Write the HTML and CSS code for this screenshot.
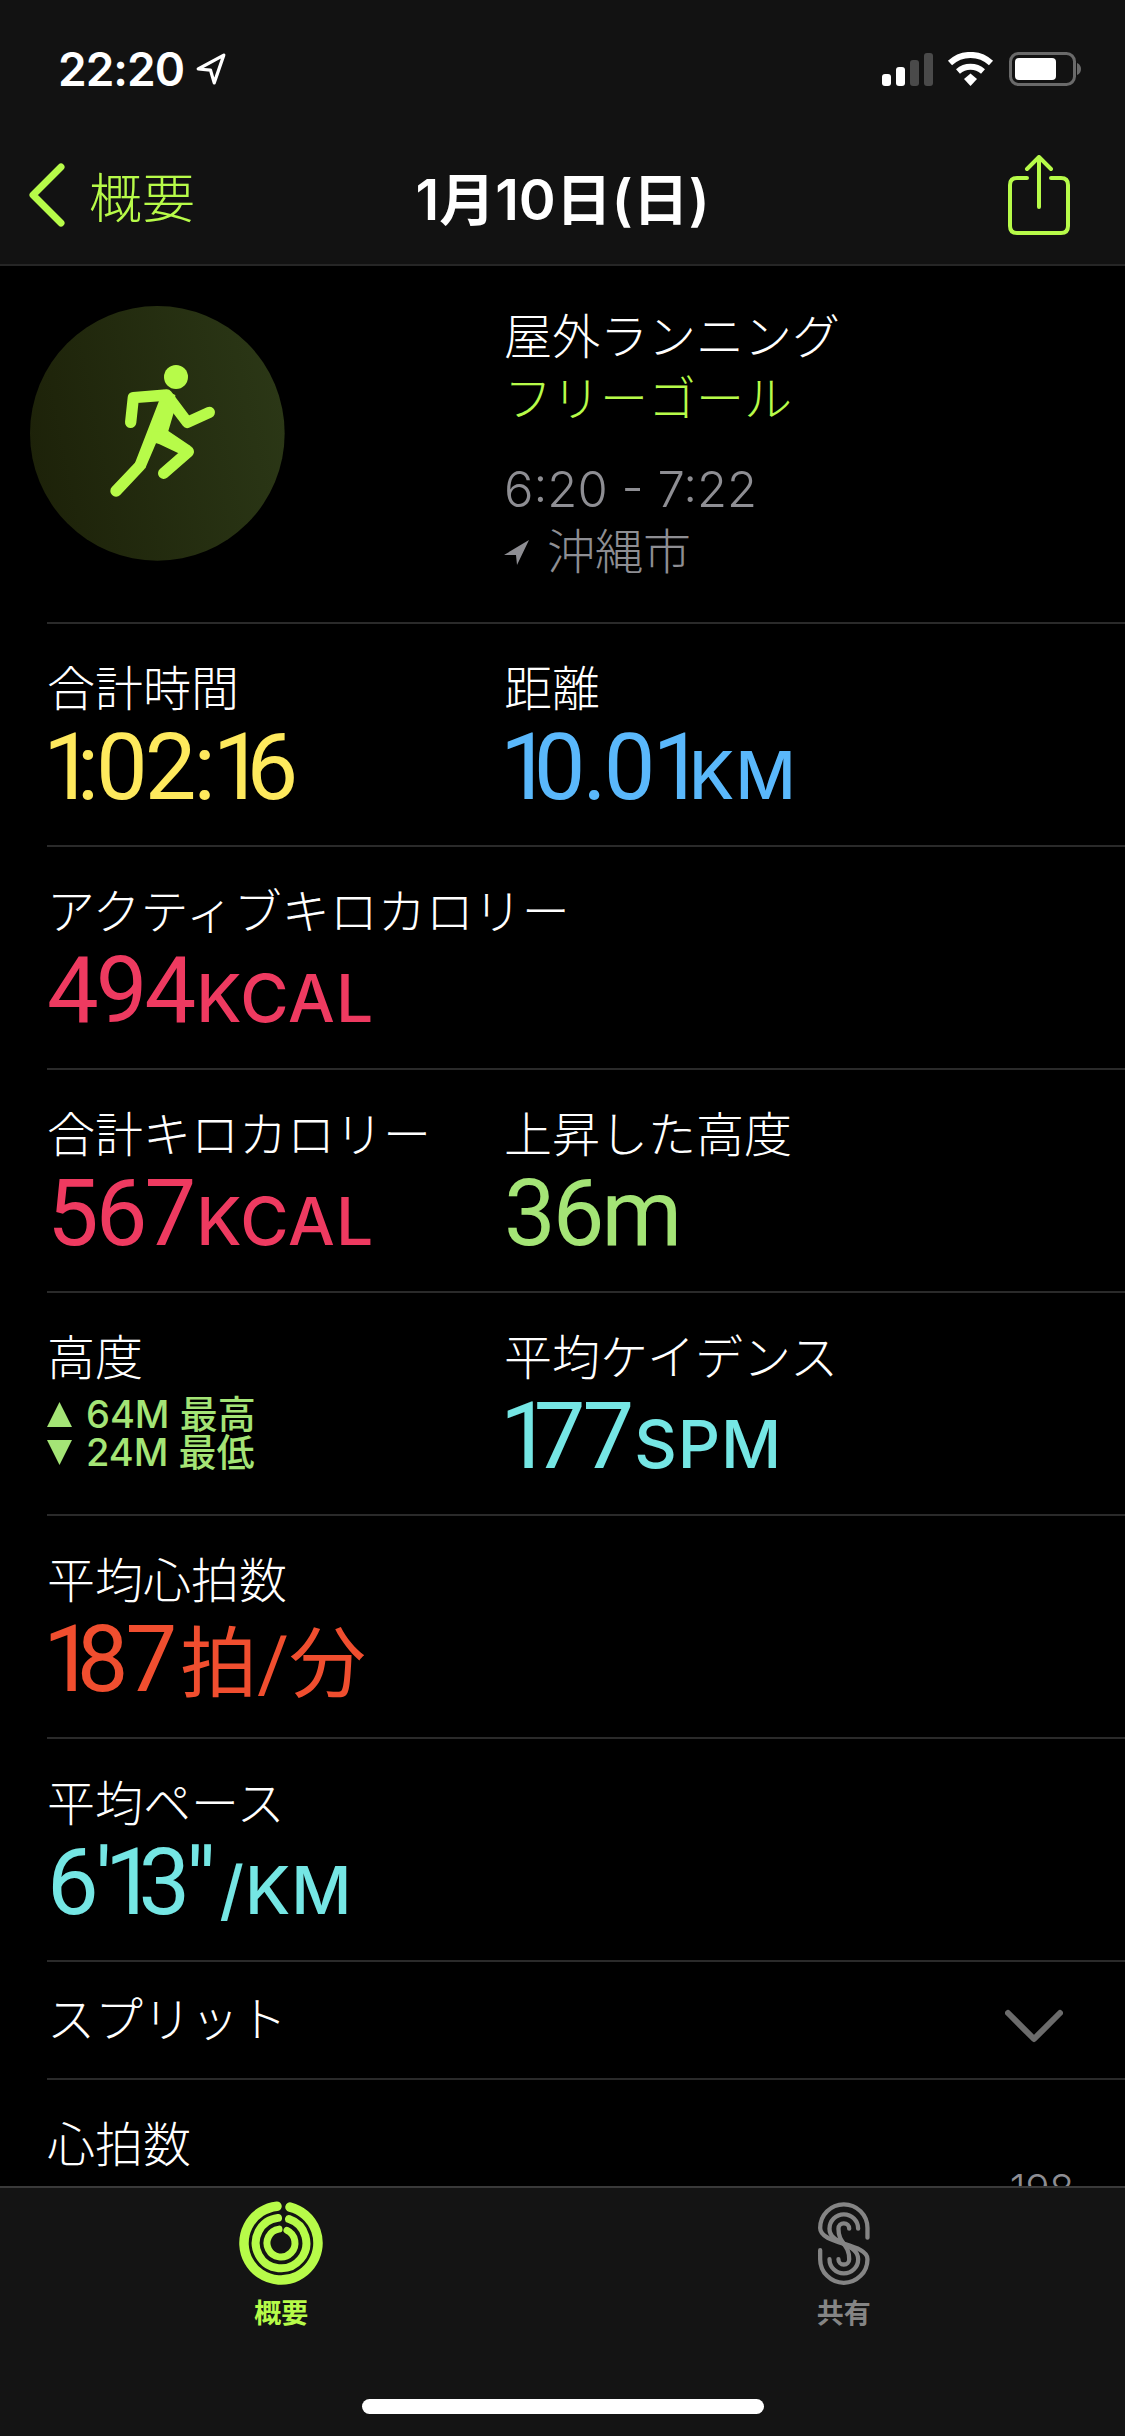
FILE: index.html
```html
<!DOCTYPE html>
<html lang="ja">
<head>
  <meta charset="UTF-8" />
  <title>1月10日(日)</title>
  <link rel="stylesheet" href="styles.css">
</head>
<body>
  <div class="screen">
    <!-- ステータスバーとナビ -->
    <header class="top">
      <div class="status">
        <div class="status-time">
          <span>22:20</span>
          <svg class="status-loc" viewBox="0 0 30 30"><path d="M27 2 L3 15 L14.5 16 L18 28 Z" fill="none" stroke="#fff" stroke-width="3" stroke-linejoin="round"/></svg>
        </div>
        <svg class="status-icons" viewBox="0 0 202 36">
          <rect x="2" y="22" width="9" height="12" rx="3" fill="#fff"/>
          <rect x="16" y="15" width="9" height="19" rx="3" fill="#fff"/>
          <rect x="30" y="8" width="9" height="26" rx="3" fill="#4a4a4a"/>
          <rect x="44" y="1" width="9" height="33" rx="3" fill="#4a4a4a"/>
          <path d="M70 11 A30 30 0 0 1 111 11" fill="none" stroke="#fff" stroke-width="6"/>
          <path d="M78 19.500 A19 19 0 0 1 103 19.500" fill="none" stroke="#fff" stroke-width="6"/>
          <path d="M84 27 L90.500 21.500 L97 27 L90.500 34 Z" fill="#fff"/>
          <rect x="130.500" y="1.500" width="64" height="31" rx="8" fill="none" stroke="#6a6a6a" stroke-width="3"/>
          <rect x="135" y="6" width="41" height="22" rx="4" fill="#fff"/>
          <path d="M197 11 C200 12 201 15 201 17 C201 19 200 22 197 23 Z" fill="#6a6a6a"/>
        </svg>
      </div>
      <nav class="nav">
        <div class="nav-back">
          <svg class="nav-chevron" viewBox="0 0 38 64"><path d="M33 4 L5 32 L33 60" fill="none" stroke="#b7fb49" stroke-width="7" stroke-linecap="round" stroke-linejoin="round"/></svg>
          <span>概要</span>
        </div>
        <div class="nav-title">1月10日(日)</div>
        <svg class="nav-share" viewBox="0 0 62 80"><path d="M19 23 H9 Q2 23 2 30 V71 Q2 78 9 78 H53 Q60 78 60 71 V30 Q60 23 53 23 H43 M31 52 V3 M19 14 L31 2 L43 14" fill="none" stroke="#b7fb49" stroke-width="4" stroke-linecap="round" stroke-linejoin="round"/></svg>
      </nav>
    </header>

    <main class="content">
      <!-- ワークアウト概要 -->
      <section class="summary">
        <svg class="workout-icon" viewBox="30 33 765 765">
          <defs>
            <linearGradient id="disc" x1="0" y1="0.6" x2="1" y2="0.4">
              <stop offset="0" stop-color="#1d2209"/>
              <stop offset="1" stop-color="#2b3716"/>
            </linearGradient>
          </defs>
          <circle cx="412" cy="415" r="382" fill="url(#disc)"/>
          <circle cx="468" cy="246" r="36" fill="#b7fb49"/>
          <path d="M430 284 L466 300 L462 350 L445 408 L515 455 L408 445 L376 520 L344 506 Z" fill="#b7fb49"/>
          <path d="M332 382 L340 308 L440 300 L502 382 L568 352" fill="none" stroke="#b7fb49" stroke-width="34" stroke-linecap="round" stroke-linejoin="round"/>
          <path d="M410 425 L505 470 L431 535" fill="none" stroke="#b7fb49" stroke-width="34" stroke-linecap="round" stroke-linejoin="round"/>
          <path d="M360 512 L288 588" fill="none" stroke="#b7fb49" stroke-width="34" stroke-linecap="round"/>
        </svg>
        <div class="summary-text">
          <div class="summary-type">屋外ランニング</div>
          <div class="summary-goal">フリーゴール</div>
          <div class="summary-time">6:20 - 7:22</div>
          <div class="summary-place">
            <svg class="place-arrow" viewBox="0 0 26 25"><path d="M25 0 L0 15 L12 15 L13 25 Z" fill="#8e8e93"/></svg>
            <span>沖縄市</span>
          </div>
        </div>
      </section>

      <section class="row">
        <div class="metric">
          <div class="label">合計時間</div>
          <div class="value yellow"><span class="n1">1</span>:02:<span class="n1">1</span>6</div>
        </div>
        <div class="metric">
          <div class="label">距離</div>
          <div class="value blue"><span class="n1">1</span>0.0<span class="n1">1</span><small>KM</small></div>
        </div>
      </section>

      <section class="row">
        <div class="metric">
          <div class="label">アクティブキロカロリー</div>
          <div class="value red">494<small>KCAL</small></div>
        </div>
      </section>

      <section class="row">
        <div class="metric">
          <div class="label">合計キロカロリー</div>
          <div class="value red">567<small>KCAL</small></div>
        </div>
        <div class="metric">
          <div class="label">上昇した高度</div>
          <div class="value green">36m</div>
        </div>
      </section>

      <section class="row">
        <div class="metric">
          <div class="label">高度</div>
          <div class="elev">
            <div class="elev-line"><svg class="elev-tri" viewBox="0 0 24 24"><path d="M12 0 L24 24 H0 Z"/></svg>64M 最高</div>
            <div class="elev-line"><svg class="elev-tri" viewBox="0 0 24 24"><path d="M0 0 H24 L12 24 Z"/></svg>24M 最低</div>
          </div>
        </div>
        <div class="metric">
          <div class="label">平均ケイデンス</div>
          <div class="value cyan"><span class="n1">1</span>77<small>SPM</small></div>
        </div>
      </section>

      <section class="row">
        <div class="metric">
          <div class="label">平均心拍数</div>
          <div class="value orange"><span class="n1">1</span>87<span class="value-cjk">拍/分</span></div>
        </div>
      </section>

      <section class="row">
        <div class="metric">
          <div class="label">平均ペース</div>
          <div class="value cyan">6'<span class="n1">1</span>3<span class="quotes">''</span><small>/KM</small></div>
        </div>
      </section>

      <section class="row-split">
        <div class="label">スプリット</div>
        <svg class="split-chevron" viewBox="0 0 58 34"><path d="M3 4 L29 30 L55 4" fill="none" stroke="#6b6b6b" stroke-width="6" stroke-linecap="round" stroke-linejoin="round"/></svg>
      </section>

      <section class="row-chart">
        <div class="label">心拍数</div>
        <div class="chart">
          <span class="chart-dot"></span>
          <span class="chart-max">198</span>
        </div>
      </section>
    </main>

    <!-- タブバー -->
    <footer class="tabbar">
      <div class="tabs">
        <div class="tab tab-active">
          <svg class="tab-icon" viewBox="0 0 86 86" fill="none" stroke="#b7fb49" stroke-linecap="round">
            <path d="M52 7.100 A37 37 0 1 1 39 6.200" stroke-width="9.500"/>
            <path d="M51 19 A25.300 25.300 0 1 1 40 17.900" stroke-width="8"/>
            <path d="M49 30.350 A14 14 0 1 1 41 29.140" stroke-width="7"/>
          </svg>
          <span>概要</span>
        </div>
        <div class="tab">
          <svg class="tab-icon" viewBox="175 70 155 240" fill="none" stroke="#858585" stroke-width="12" stroke-linecap="round">
            <path d="M318 175 V148 A66 66 0 0 0 186 148 C186 195 318 190 318 235 A66 66 0 0 1 186 235 V210"/>
            <path d="M292 150 A40 40 0 0 0 212 150 C212 195 292 190 292 235 A40 40 0 0 1 212 235"/>
            <path d="M267 150 A15 15 0 0 0 237 150 C237 195 267 190 267 235 A15 15 0 0 1 237 235"/>
          </svg>
          <span>共有</span>
        </div>
      </div>
      <div class="home-bar"></div>
    </footer>
  </div>
</body>
</html>
```

FILE: styles.css
```css
/* === ZÁKLAD === */
body {
  margin: 0;
  background: #000;
  color: #fff;
  font-family: Inter, "Noto Sans CJK JP", sans-serif;
}

.screen {
  width: 1125px;
  height: 2436px;
  display: flex;
  flex-direction: column;
  overflow: hidden;
}

/* === HORNÍ LIŠTA === */
.top {
  height: 264px;
  flex: none;
  background: #121212;
  border-bottom: 2px solid #262626;
}

.status {
  height: 140px;
  padding: 52px 43px 0 58px;
  box-sizing: border-box;
  display: flex;
  justify-content: space-between;
  align-items: flex-start;
}

.status-time {
  display: flex;
  align-items: center;
  gap: 11px;
  height: 34px;
  font-size: 46px;
  font-weight: 600;
  letter-spacing: -1px;
}

.status-loc {
  width: 32px;
  height: 32px;
}

.status-icons {
  width: 202px;
  height: 36px;
}

.nav {
  height: 110px;
  position: relative;
  display: flex;
  justify-content: space-between;
  align-items: center;
  padding: 0 55px 0 28px;
}

.nav-back {
  display: flex;
  align-items: center;
  gap: 23px;
  color: #b7fb49;
  font-size: 53px;
  font-weight: 300;
}

.nav-chevron {
  width: 38px;
  height: 64px;
}

.nav-title {
  position: absolute;
  left: 0;
  right: 0;
  text-align: center;
  font-size: 56px;
  font-weight: 600;
}

.nav-share {
  width: 62px;
  height: 80px;
}

/* === OBSAH === */
.content {
  flex: 1;
  overflow: hidden;
  min-height: 0;
}

.summary {
  height: 356px;
  display: grid;
  grid-template-columns: 504px 1fr;
  box-sizing: border-box;
  padding-top: 40px;
  position: relative;
}

.workout-icon {
  width: 255px;
  height: 255px;
  margin-left: 30px;
}

.summary-text {
  font-size: 48px;
  line-height: 62px;
  font-weight: 300;
}

.summary-goal {
  color: #b7fb49;
}

.summary-time {
  color: #8e8e93;
  margin-top: 29px;
  font-size: 49px;
}

.summary-place {
  color: #8e8e93;
  display: flex;
  align-items: center;
  gap: 17px;
}

.place-arrow {
  width: 26px;
  height: 25px;
}

.row {
  height: 223px;
  box-sizing: border-box;
  margin-left: 47px;
  padding: 37px 0 0 0;
  border-top: 2px solid #2a2a2a;
  display: grid;
  grid-template-columns: 457px 1fr;
}

.label {
  font-size: 48px;
  line-height: 56px;
  font-weight: 300;
  white-space: nowrap;
}

.value {
  font-family: Roboto, "Noto Sans CJK JP", sans-serif;
  font-size: 92px;
  line-height: 96px;
  font-weight: 400;
  letter-spacing: -3px;
  white-space: nowrap;
  margin-top: 3px;
}

.n1 {
  letter-spacing: -18px;
}

.n1:first-child {
  margin-left: -4px;
}

.quotes {
  letter-spacing: 1px;
}

.value small {
  font-family: Inter, sans-serif;
  font-weight: 500;
  font-size: 66px;
  letter-spacing: 1px;
  margin-left: 3px;
}

.value-cjk {
  font-size: 77px;
  letter-spacing: 0;
  margin-left: 6px;
}

.yellow { color: #fee95d; }
.blue { color: #5ab8fb; }
.red { color: #ee3a60; }
.green { color: #a4e476; }
.cyan { color: #75e6e4; }
.orange { color: #f04e2f; }

.elev {
  margin-top: 9px;
  color: #a4e476;
  font-size: 38px;
  line-height: 38px;
  font-weight: 500;
}

.elev-line {
  display: flex;
  align-items: center;
  gap: 14px;
}

.elev-tri {
  width: 25px;
  height: 25px;
  fill: #a4e476;
}

.row-split {
  height: 118px;
  box-sizing: border-box;
  margin-left: 47px;
  padding: 0 62px 0 0;
  border-top: 2px solid #2a2a2a;
  display: flex;
  justify-content: space-between;
  align-items: center;
}

.split-chevron {
  width: 58px;
  height: 34px;
  margin-top: 12px;
}

.row-chart {
  box-sizing: border-box;
  margin-left: 47px;
  padding: 37px 0 0 0;
  border-top: 2px solid #2a2a2a;
}

.chart {
  position: relative;
  height: 40px;
  display: flex;
  justify-content: flex-end;
  padding-right: 51px;
  margin-top: -6px;
}

.chart-max {
  color: #8e8e93;
  font-size: 40px;
  line-height: 44px;
  font-weight: 300;
}

.chart-dot {
  position: absolute;
  left: 378px;
  top: 20px;
  width: 6px;
  height: 6px;
  border-radius: 50%;
  background: #f04e2f;
}

/* === TABY === */
.tabbar {
  height: 250px;
  flex: none;
  box-sizing: border-box;
  background: #141414;
  border-top: 2px solid #3a3a3a;
  position: relative;
  z-index: 1;
}

.tabs {
  display: grid;
  grid-template-columns: 1fr 1fr;
}

.tab {
  display: flex;
  flex-direction: column;
  align-items: center;
  padding-top: 12px;
  color: #858585;
  font-size: 27px;
  font-weight: 700;
}

.tab-active {
  color: #b7fb49;
}

.tab-icon {
  height: 86px;
  width: 86px;
  margin-bottom: 6px;
}

.home-bar {
  width: 402px;
  height: 15px;
  margin: 68px auto 0;
  border-radius: 8px;
  background: #fff;
}
```
